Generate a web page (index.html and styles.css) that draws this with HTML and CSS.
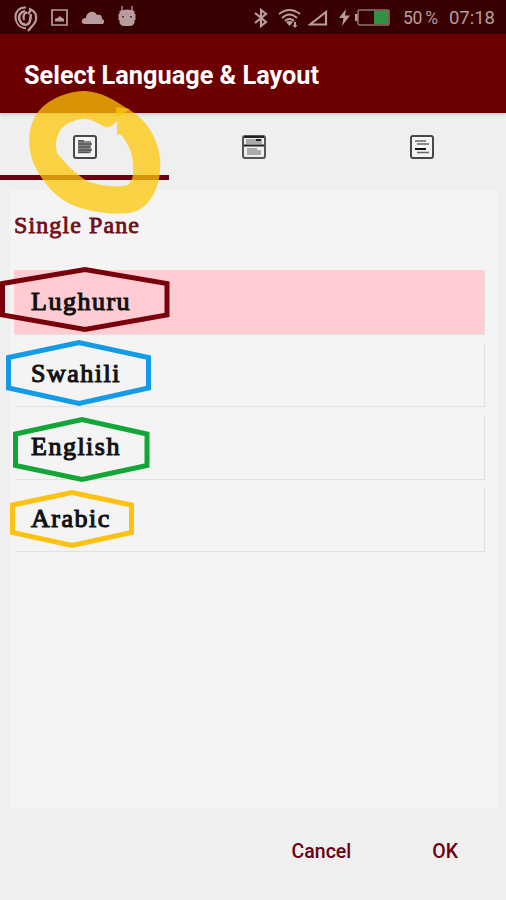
FILE: index.html
```
<!DOCTYPE html>
<html lang="en">

<head>
    <meta charset="UTF-8">
    <meta name="viewport" content="width=device-width, initial-scale=1.0">
    <title>Select Language &amp; Layout</title>
    <link rel="stylesheet" href="styles.css">
</head>

<body>
    <div class="statusBar">
        <div class="notifications">
            <svg class="iconApp" width="26" height="28" viewBox="0 0 26 28" fill="none" stroke="#b79d9d">
                <path stroke-width="2" d="M13 3.500C6 3 2 8 2.500 14C3 20 7 24 13 24.500"/>
                <path stroke-width="2.600" d="M12 7C7 8 5 12 6.500 16C8 20 12 22 15 20C18 18 17 14 18 10"/>
                <path stroke-width="2.200" d="M16 4.500C22 7 24 11 23 16C22 20 19 22 15 27M14 8C10 10 10 13 11 16M18 6L15 10"/>
            </svg>
            <svg class="iconPicture" width="17" height="17" viewBox="0 0 17 17">
                <path fill="none" stroke="#b79d9d" stroke-width="1.7" d="M1 1H16V16H1Z"/>
                <path fill="#b79d9d" d="M4 12.500V10L6 9L7 9L8.500 7L13 10V12.500Z"/>
            </svg>
            <svg class="iconCloud" width="24" height="14" viewBox="0 0 24 14">
                <path fill="#b79d9d" d="M4 13C-1 13 0 7 5 7C5 1 13-2 16 4C20 3 21 5 21 8C24 9 24 13 20 13Z"/>
            </svg>
            <svg class="iconRobot" width="18" height="22" viewBox="0 0 18 22">
                <path fill="none" stroke="#b79d9d" stroke-width="1.3" d="M4 1V7M14 1V7"/>
                <path fill="#b79d9d" d="M1.500 6Q9 3 16.500 6V9H17.500V15H16.500V18Q15 21 12 21H6Q3 21 1.500 18V15H0.500V9H1.500Z"/>
                <path fill="#5c3030" d="M4 11h2v1.500H4zM12 11h2v1.500h-2z"/>
            </svg>
        </div>
        <div class="system">
            <svg class="iconBluetooth" width="16" height="20" viewBox="0 0 16 20">
                <path fill="none" stroke="#b79d9d" stroke-width="2.200" d="M2 5L13 14L8 18V2L13 6L2 15"/>
            </svg>
            <svg class="iconWifi" width="23" height="20" viewBox="0 0 23 20">
                <path fill="none" stroke="#b79d9d" stroke-width="2" d="M1 6Q11.500-2 22 6M4 10Q11.500 3 19 10M7 13Q11.500 9 16 13"/>
                <path fill="#b79d9d" d="M8 14Q11.500 12 15 14L11.500 18ZM16 14h2v3h1.500L17 20L14.500 17H16Z"/>
            </svg>
            <svg class="iconSignal" width="20" height="18" viewBox="0 0 20 18">
                <path fill="none" stroke="#b79d9d" stroke-width="2.200" d="M2 15.500L18 3V15.500Z"/>
            </svg>
            <svg class="iconBolt" width="11" height="17" viewBox="0 0 11 17">
                <path fill="#b79d9d" d="M7 0L0 9H4.500L3 17L11 6.500H6Z"/>
            </svg>
            <svg class="iconBattery" width="35" height="17" viewBox="0 0 35 17">
                <rect x="3" y="1" width="31" height="15" rx="1.500" fill="none" stroke="#8e7474" stroke-width="1.500"/>
                <path fill="#b79d9d" d="M0 5H2.500V12H0Z"/>
                <path fill="#329244" d="M19 2H33V15H19Z"/>
            </svg>
            <span class="percent">50 %</span>
            <span class="clock">07:18</span>
        </div>
    </div>

    <div class="titleBar">
        <h1>Select Language &amp; Layout</h1>
    </div>

    <div class="tabs">
        <div class="tab active">
            <svg width="24" height="24" viewBox="0 0 24 24">
                <rect x="1" y="1" width="22" height="22" rx="2" fill="#f4f4f4" stroke="#484848" stroke-width="2"/>
                <path fill="#888" d="M5 5H11V6H18V18H5Z"/>
                <path fill="none" stroke="#555" stroke-width="1.300" d="M5 6H11M5 9H19M5 12H17M5 15H19M5 17.500H16"/>
            </svg>
        </div>
        <div class="tab">
            <svg width="24" height="24" viewBox="0 0 24 24">
                <rect x="1" y="1" width="22" height="22" rx="2" fill="#eee" stroke="#555" stroke-width="2"/>
                <path fill="#aaa" d="M4 4H20V9H4ZM5 13H15V15H19V20H5Z"/>
                <path fill="none" stroke="#222" stroke-width="2" d="M2 2H22M2 10.500H22M14 5H19"/>
            </svg>
        </div>
        <div class="tab">
            <svg width="24" height="24" viewBox="0 0 24 24">
                <rect x="1" y="1" width="22" height="22" rx="2" fill="#f4f4f4" stroke="#484848" stroke-width="2"/>
                <path fill="none" stroke="#666" stroke-width="1.500" d="M5 6H16M7 9H19M7 17.500H19"/>
                <path fill="none" stroke="#111" stroke-width="2" d="M5 14H16"/>
            </svg>
        </div>
    </div>

    <div class="pane">
        <h2>Single Pane</h2>
        <ul class="languages">
            <li class="language selected">Lughuru</li>
            <li class="language">Swahili</li>
            <li class="language">English</li>
            <li class="language">Arabic</li>
        </ul>
    </div>

    <div class="buttons">
        <button class="cancel">Cancel</button>
        <button class="ok">OK</button>
    </div>

    <!-- marker drawings over the screen -->
    <svg class="marks" width="506" height="900" viewBox="0 0 506 900">
        <path class="ring" d="M38 112C49 98 69 91 85 91C102 92 114 100 128 109C146 119 157 136 160 158C162 183 153 205 134 212C116 216 87 212 70 204C51 194 42 179 37 170C27 153 26 128 38 112ZM58 135C55 142 56 147 57 153C68 166 81 180 93 183C106 187 119 187 128 185C132 181 134 175 133 166C133 152 127 141 120 134L117 135V121C113 126 108 128 105 127C94 121 88 118 82 119C72 120 60 126 58 135Z"/>
        <path class="ring" d="M116 107L130 109L117 118Z"/>
        <g class="hexagons">
            <path stroke="#78000b" d="M2.500 283.500L85 269.500L167 283.500V315L85 329.500L2.500 315Z"/>
            <path stroke="#149be8" d="M8.500 357.500L79 342.500L148.500 357.500V388L79 403.500L8.500 388Z"/>
            <path stroke="#12a637" d="M15.500 434L82 419.500L147 434V465.500L82 479.500L15.500 465.500Z"/>
            <path stroke="#fdc110" d="M12.500 505L72 492.500L131.500 505V532.500L72 545.500L12.500 532.500Z"/>
        </g>
    </svg>
</body>

</html>
```

FILE: styles.css
```
* {
    box-sizing: border-box;
}

body {
    display: flex;
    flex-direction: column;
    height: 900px;
    margin: 0;
    position: relative;
    overflow: hidden;
    font-family: Roboto, sans-serif;
    background-color: #efefef;
}

.statusBar {
    display: flex;
    justify-content: space-between;
    height: 34px;
    padding: 1px 11px 0 13px;
    background-color: #380000;
    color: #b79d9d;
}

.notifications,
.system {
    display: flex;
    align-items: center;
}

.iconPicture {
    margin-left: 12px;
}

.iconCloud {
    margin-left: 13px;
}

.iconRobot {
    margin-left: 13px;
    margin-top: -3px;
}

.iconWifi {
    margin-left: 9px;
}

.iconSignal {
    margin-left: 7px;
}

.iconBolt {
    margin-left: 11px;
}

.iconBattery {
    margin-left: 5px;
}

.percent {
    margin-left: 13px;
    font-size: 17.5px;
    letter-spacing: -0.2px;
    word-spacing: -1px;
    white-space: nowrap;
}

.clock {
    margin-left: 11px;
    font-size: 18.5px;
}

.titleBar {
    display: flex;
    align-items: center;
    height: 79px;
    padding: 3px 24px 0;
    background-color: #6c0000;
    box-shadow: 0 1px 4px rgba(60, 70, 100, 0.3);
}

h1 {
    margin: 0;
    color: #fff;
    font-size: 25.3px;
    font-weight: 700;
    white-space: nowrap;
}

.tabs {
    display: flex;
    height: 67px;
}

.tab {
    flex: 1;
    display: flex;
    justify-content: center;
    padding: 22px 0 0 1px;
    border-bottom: 5px solid transparent;
}

.tab.active {
    border-bottom-color: #6c0010;
}

.pane {
    height: 618px;
    margin: 10px 8px 0 10px;
    padding: 19px 14px 0 4px;
    background-color: #f4f4f4;
    font-family: "Liberation Serif", serif;
}

h2 {
    margin: 0;
    height: 61px;
    color: #710c19;
    font-size: 24px;
    font-weight: normal;
    line-height: 32px;
    letter-spacing: 1.1px;
    -webkit-text-stroke: 0.8px #710c19;
}

.languages {
    display: flex;
    flex-direction: column;
    gap: 8.4px;
    margin: 0;
    padding: 0;
    list-style: none;
}

.language {
    height: 64px;
    padding-left: 17px;
    color: #111;
    font-size: 26px;
    line-height: 63px;
    letter-spacing: 1.5px;
    -webkit-text-stroke: 1.1px #111;
    box-shadow: 1px 1px 1px 0 #e1e1e1;
}

.language.selected {
    background-color: #ffccd3;
}

.buttons {
    display: flex;
    justify-content: flex-end;
    padding: 29px 48px 0 0;
}

button {
    padding: 0;
    border: none;
    background: none;
    color: #6c0010;
    font-family: Roboto, sans-serif;
    font-size: 19.5px;
    font-weight: 500;
    line-height: 30px;
}

.ok {
    margin-left: 81px;
}

.marks {
    position: absolute;
    top: 0;
    left: 0;
    pointer-events: none;
}

.ring {
    fill: #ffc608;
    fill-opacity: 0.74;
    fill-rule: evenodd;
}

.hexagons {
    fill: none;
    stroke-width: 5;
    stroke-linejoin: miter;
}
```
